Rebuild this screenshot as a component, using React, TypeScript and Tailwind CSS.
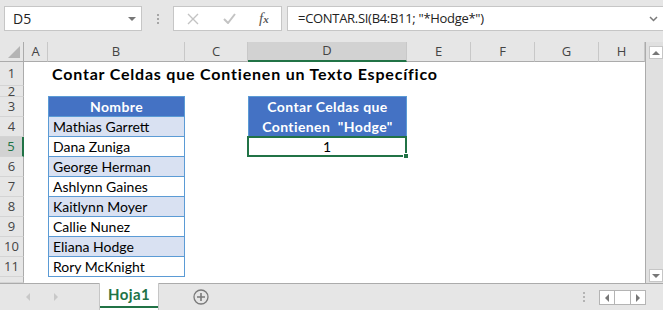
import React from 'react';

const cal = "font-['Lato','Liberation_Sans',sans-serif]";
const ui = "font-['Open_Sans','Liberation_Sans',sans-serif]";

const names = [
  'Mathias Garrett',
  'Dana Zuniga',
  'George Herman',
  'Ashlynn Gaines',
  'Kaitlynn Moyer',
  'Callie Nunez',
  'Eliana Hodge',
  'Rory McKnight',
];

const colHeads = ['A', 'B', 'C', 'D', 'E', 'F', 'G', 'H'];

function RowHead({ n, sel }: { n?: number; sel?: boolean }) {
  return (
    <div
      className={`${ui} flex items-center justify-center text-[13px] leading-none border-b border-[#d4d4d4] ${
        sel
          ? 'bg-[#d2d2d2] text-[#217346] border-r-2 border-r-[#217346]'
          : 'bg-[#e6e6e6] text-[#444] border-r border-r-[#ababab]'
      } overflow-hidden`}
    >
      {n}
    </div>
  );
}

const Empty = () => <div />;

export default function App() {
  const cells: React.ReactNode[] = [];

  // column headers
  cells.push(
    <div key="corner" className="relative bg-[#e6e6e6] border-r border-b border-[#ababab]">
      <div className="absolute right-[3px] bottom-[3px] w-0 h-0 border-l-[12px] border-l-transparent border-b-[12px] border-b-[#b4b4b4]" />
    </div>
  );
  colHeads.forEach((c) => {
    const sel = c === 'D';
    cells.push(
      <div
        key={'h' + c}
        className={`${ui} flex items-center justify-center text-[13px] text-[#444] border-r border-r-[#c8c8c8] ${
          sel ? 'bg-[#d2d2d2] border-b-2 border-b-[#217346]' : 'bg-[#e6e6e6] border-b border-b-[#ababab]'
        }`}
      >
        {c}
      </div>
    );
  });

  // row 1
  cells.push(<RowHead key="r1" n={1} />);
  cells.push(<Empty key="1a" />);
  cells.push(
    <div key="1b" className={`${cal} col-span-7 flex items-center pl-[4px] text-[16px] font-bold tracking-[0.8px] text-black whitespace-nowrap`}>
      Contar Celdas que Contienen un Texto Específico
    </div>
  );

  // row 2
  cells.push(<RowHead key="r2" n={2} />);
  cells.push(<Empty key="2a" />);
  cells.push(<div key="2b" className="border-b border-[#5b9bd5]" />);
  cells.push(<Empty key="2c" />);
  cells.push(<div key="2d" className="border-b border-[#5b9bd5]" />);
  cells.push(<Empty key="2e" />, <Empty key="2f" />, <Empty key="2g" />, <Empty key="2h" />);

  // row 3
  cells.push(<RowHead key="r3" n={3} />);
  cells.push(<Empty key="3a" />);
  cells.push(
    <div key="3b" className={`${cal} bg-[#4472c4] border-x border-b border-[#5b9bd5] flex items-center justify-center text-white font-bold text-[14px] tracking-[0.4px]`}>
      Nombre
    </div>
  );
  cells.push(<Empty key="3c" />);
  cells.push(
    <div
      key="3d"
      className={`${cal} row-span-2 bg-[#4472c4] border-x border-[#5b9bd5] flex flex-col items-center justify-center text-white font-bold text-[14px] tracking-[0.4px] leading-[20px]`}
    >
      <span>Contar Celdas que</span>
      <span className="whitespace-pre">Contienen  "Hodge"</span>
    </div>
  );
  cells.push(<Empty key="3e" />, <Empty key="3f" />, <Empty key="3g" />, <Empty key="3h" />);

  // rows 4-11
  names.forEach((name, i) => {
    const r = i + 4;
    cells.push(<RowHead key={'r' + r} n={r} sel={r === 5} />);
    cells.push(<Empty key={r + 'a'} />);
    cells.push(
      <div
        key={r + 'b'}
        className={`${cal} border-x border-b border-[#5b9bd5] flex items-center pl-[4px] text-[14px] text-black ${
          i % 2 === 0 ? 'bg-[#d9e1f2]' : 'bg-white'
        }`}
      >
        {name}
      </div>
    );
    cells.push(<Empty key={r + 'c'} />);
    if (r === 5) {
      cells.push(
        <div key="5d" className="relative -ml-px -mt-px border-2 border-[#217346] flex items-center justify-center text-[14px] text-black">
          <span className={cal}>1</span>
          <div className="absolute -right-[4px] -bottom-[4px] w-[6px] h-[6px] bg-[#217346] border border-white" />
        </div>
      );
    } else if (r !== 4) {
      cells.push(<Empty key={r + 'd'} />);
    }
    cells.push(<Empty key={r + 'e'} />, <Empty key={r + 'f'} />, <Empty key={r + 'g'} />, <Empty key={r + 'h'} />);
  });

  // partial row 12
  cells.push(<RowHead key="r12" />);

  return (
    <div className="w-[663px] h-[310px] bg-[#e6e6e6] overflow-hidden flex flex-col">
      {/* formula bar */}
      <div className="h-[42px] flex items-start pt-[6px] shrink-0">
        <div className={`${ui} ml-[4px] w-[138px] h-[25px] bg-white border border-[#c6c6c6] flex items-center justify-between pl-[8px] pr-[5px] text-[14px] text-[#222]`}>
          <span>D5</span>
          <span className="w-0 h-0 border-x-[4px] border-x-transparent border-t-[4px] border-t-[#777]" />
        </div>
        <div className="w-[31px] h-[25px] flex flex-col items-center justify-center gap-[2px]">
          <span className="w-[2px] h-[2px] bg-[#a6a6a6]" />
          <span className="w-[2px] h-[2px] bg-[#a6a6a6]" />
          <span className="w-[2px] h-[2px] bg-[#a6a6a6]" />
        </div>
        <div className="w-[109px] h-[25px] bg-white border border-[#c6c6c6] flex items-center">
          <svg width="12" height="12" viewBox="0 0 12 12" className="ml-[13px]">
            <path d="M1 1 L11 11 M11 1 L1 11" stroke="#c3c3c3" strokeWidth="1.4" />
          </svg>
          <svg width="13" height="11" viewBox="0 0 13 11" className="ml-[24px]">
            <path d="M1 6 L5 10 L12 1" stroke="#c3c3c3" strokeWidth="2" fill="none" />
          </svg>
          <span className="ml-[23px] font-['Liberation_Serif',serif] italic text-[15px] text-[#555] leading-none">
            f<span className="text-[11px] font-bold">x</span>
          </span>
        </div>
        <div className={`${ui} ml-[5px] flex-1 h-[25px] bg-white border border-[#c6c6c6] border-r-0 flex items-center justify-between pl-[10px] pr-[5px] text-[13px] tracking-[-0.3px] text-[#222]`}>
          <span className="whitespace-pre">=CONTAR.SI(B4:B11; "*Hodge*")</span>
          <svg width="9" height="6" viewBox="0 0 9 6">
            <path d="M1 1 L4.5 4.5 L8 1" stroke="#7a7a7a" strokeWidth="1.5" fill="none" />
          </svg>
        </div>
      </div>

      {/* sheet */}
      <div className="flex h-[241px] shrink-0">
        <div className="w-[646px] bg-white border-r border-[#ababab] grid grid-cols-[24px_24px_137px_63px_159px_64px_64px_64px_46px] grid-rows-[20px_24px_11px_repeat(9,20px)_6px] overflow-hidden">
          {cells}
        </div>
        <div className="flex-1 bg-[#e0e0e0] flex flex-col items-end pl-[2px]">
          <div className="mt-[4px] w-[14px] h-[13px] bg-white border border-[#c6c6c6] flex items-center justify-center">
            <span className="w-0 h-0 border-x-[4px] border-x-transparent border-b-[4px] border-b-[#777]" />
          </div>
          <div className="flex-1" />
          <div className="mb-[1px] w-[14px] h-[13px] bg-white border border-[#c6c6c6] flex items-center justify-center">
            <span className="w-0 h-0 border-x-[4px] border-x-transparent border-t-[4px] border-t-[#777]" />
          </div>
        </div>
      </div>

      {/* sheet tabs */}
      <div className="flex-1 flex items-stretch border-t border-[#ababab]">
        <div className="w-[99px] flex items-center">
          <span className="ml-[26px] w-0 h-0 border-y-[4px] border-y-transparent border-r-[4px] border-r-[#c8c8c8]" />
          <span className="ml-[24px] w-0 h-0 border-y-[4px] border-y-transparent border-l-[4px] border-l-[#c8c8c8]" />
        </div>
        <div className="w-[60px] -mt-px bg-white border-x border-[#c6c6c6] flex flex-col">
          <div className={`${cal} flex-1 flex items-center justify-center font-bold text-[15px] tracking-[0.4px] text-[#217346]`}>Hoja1</div>
          <div className="h-[2px] bg-[#217346] mb-[3px]" />
        </div>
        <div className="ml-[34px] flex items-center">
          <svg width="16" height="16" viewBox="0 0 16 16">
            <circle cx="8" cy="8" r="7" stroke="#7a7a7a" strokeWidth="1.3" fill="none" />
            <path d="M8 4 V12 M4 8 H12" stroke="#7a7a7a" strokeWidth="1.6" />
          </svg>
        </div>
        <div className="flex-1" />
        <div className="flex flex-col justify-center gap-[2px] mr-[14px]">
          <span className="w-[2px] h-[2px] bg-[#b4b4b4]" />
          <span className="w-[2px] h-[2px] bg-[#b4b4b4]" />
          <span className="w-[2px] h-[2px] bg-[#b4b4b4]" />
        </div>
        <div className="mr-[17px] mt-[6px] h-[15px] flex">
          <div className="w-[16px] bg-white border border-[#b4b4b4] flex items-center justify-center">
            <span className="w-0 h-0 border-y-[4px] border-y-transparent border-r-[4px] border-r-[#777]" />
          </div>
          <div className="w-[15px] bg-white border-y border-[#b4b4b4]" />
          <div className="w-[16px] bg-white border border-[#b4b4b4] flex items-center justify-center">
            <span className="w-0 h-0 border-y-[4px] border-y-transparent border-l-[4px] border-l-[#777]" />
          </div>
        </div>
      </div>
    </div>
  );
}
